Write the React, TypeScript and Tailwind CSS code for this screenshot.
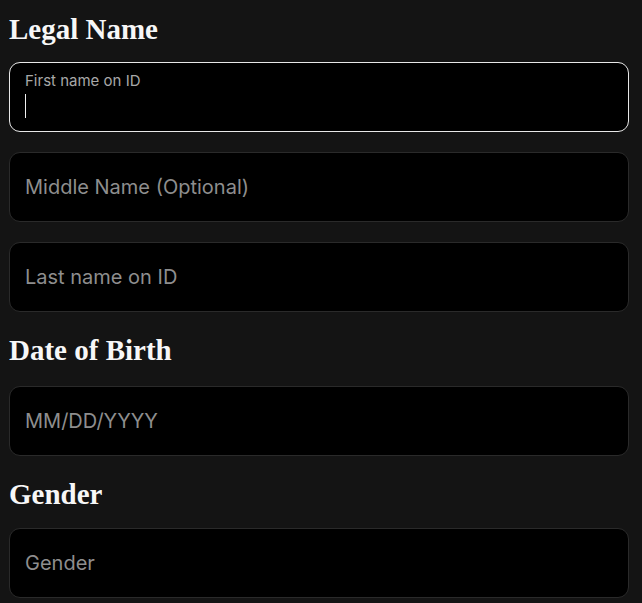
import { useState } from 'react';

const heading =
  "font-['Liberation_Serif',serif] font-bold text-[29px] leading-[37px] text-[#f7f7f7]";

const fieldBox =
  'h-[70px] w-full rounded-[11px] border border-[#2a2a2a] bg-black px-[15px] text-[20px] text-[#e5e5e5] outline-none placeholder:text-[#8e8e8e]';

function Field({ placeholder }: { placeholder: string }) {
  const [value, setValue] = useState('');
  return (
    <input
      type="text"
      value={value}
      onChange={(e) => setValue(e.target.value)}
      placeholder={placeholder}
      className={fieldBox}
    />
  );
}

// first name field is shown in its focused state: floating label + caret
function FocusedField({ label }: { label: string }) {
  return (
    <div className="flex h-[70px] w-full flex-col rounded-[11px] border border-[#e8e8e8] bg-black px-[15px] pt-[9px]">
      <span className="text-[15px] leading-[18px] text-[#a8a8a8]">{label}</span>
      <span className="mt-[4px] h-[24px] w-px bg-[#f0f0f0]" />
    </div>
  );
}

export default function App() {
  return (
    <div className="min-h-[603px] w-full bg-[#141414] font-['Inter',sans-serif]">
      <div className="w-[620px] pl-[9px] pt-[11px] box-content">
        <h2 className={heading}>Legal Name</h2>
        <div className="mt-[14px] flex flex-col gap-[20px]">
          <FocusedField label="First name on ID" />
          <Field placeholder="Middle Name (Optional)" />
          <Field placeholder="Last name on ID" />
        </div>

        <h2 className={`${heading} mt-[20px]`}>Date of Birth</h2>
        <div className="mt-[17px]">
          <Field placeholder="MM/DD/YYYY" />
        </div>

        <h2 className={`${heading} mt-[20px]`}>Gender</h2>
        <div className="mt-[15px]">
          <Field placeholder="Gender" />
        </div>
      </div>
    </div>
  );
}
